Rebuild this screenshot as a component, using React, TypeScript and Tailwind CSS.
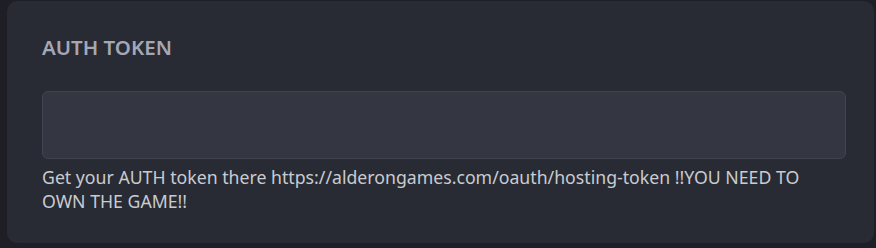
export default function App() {
  return (
    <div className="min-h-[248px] w-[876px] bg-[#1d1e26] pl-[7px] pr-[2px] pt-[1px] pb-[5px] font-['Noto_Sans',sans-serif]">
      <div className="h-[242px] rounded-[10px] bg-[#282b33] px-[35px] pt-[32px]">
        <h2 className="text-[20.5px] leading-[28px] font-semibold text-[#a5a7b4]">AUTH TOKEN</h2>
        <input
          type="text"
          className="mt-[30px] block h-[68px] w-[804px] rounded-[6px] border border-[#41444e] bg-[#343741] px-3 text-[16px] text-[#d0d2d8] outline-none"
        />
        <p className="mt-[6px] w-[804px] text-[17.7px] leading-[24px] text-[#c9cbd1]">
          Get your AUTH token there https://alderongames.com/oauth/hosting-token !!YOU NEED TO OWN THE GAME!!
        </p>
      </div>
    </div>
  );
}
